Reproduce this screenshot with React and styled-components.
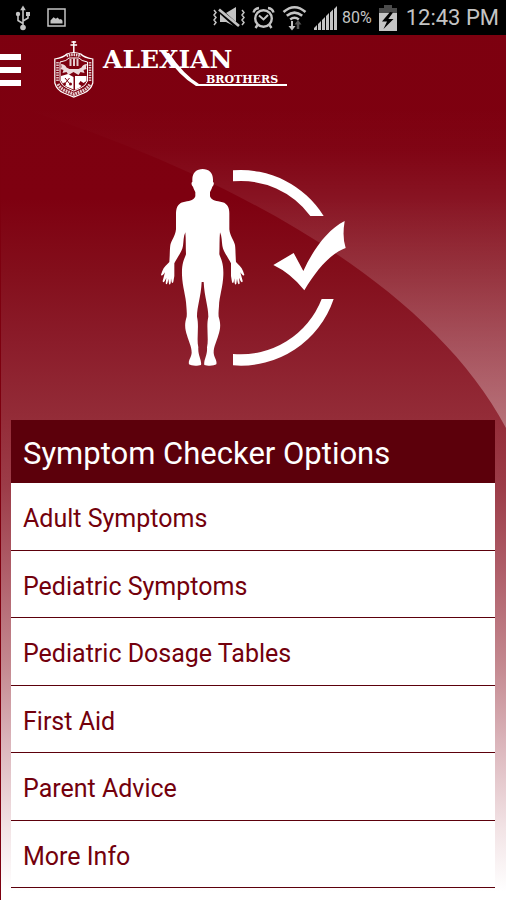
import React from 'react';
import styled, {createGlobalStyle} from 'styled-components';

const red = '#7d000f';
const darkRed = '#5c000b';

const GlobalStyle = createGlobalStyle`
  * {
    box-sizing: border-box;
  }
  body {
    margin: 0;
    font-family: Roboto, "Liberation Sans", sans-serif;
  }
`;

const Page = styled.div`
  position: relative;
  display: flex;
  flex-direction: column;
  min-height: 100vh;
  box-shadow: inset 1px 0 ${red};
  background: linear-gradient(
    #7d000f 0%,
    #7e0010 22%,
    #830e1b 30%,
    #8b1c2a 38%,
    #932b37 46%,
    #9c3c48 54%,
    #b0606b 64%,
    #c48990 74%,
    #dcb7bd 83%,
    #f2e3e5 92%,
    #ffffff 99%
  );
`;

const Swoosh = styled.svg`
  position: absolute;
  top: 0;
  left: 0;
  width: 100%;
  height: 428px;
`;

const StatusBar = styled.div`
  position: relative;
  display: flex;
  align-items: center;
  justify-content: space-between;
  height: 35px;
  padding: 0 7px 0 14px;
  color: #c4c4c4;
  background-color: #000;
`;

const StatusGroup = styled.div`
  display: flex;
  align-items: center;
  gap: ${({gap}) => gap};
`;

const Percent = styled.span`
  margin-left: -3px;
  font-size: 16px;
  line-height: 20px;
`;

const Clock = styled.span`
  padding-left: 2px;
  font-size: 22px;
  line-height: 28px;
`;

const Header = styled.header`
  position: relative;
  display: flex;
  align-items: center;
  gap: 32px;
  height: 70px;
`;

const MenuButton = styled.button`
  display: flex;
  flex-direction: column;
  gap: 7px;
  width: 21px;
  padding: 0;
  border: 0;
  background: none;
  cursor: pointer;
`;

const Bar = styled.span`
  height: 6px;
  background-color: #fff;
`;

const HomeLink = styled.a`
  display: flex;
`;

const Hero = styled.div`
  position: relative;
  display: flex;
  justify-content: center;
  padding: 63px 0 53px;
`;

const Options = styled.nav`
  position: relative;
  margin: 0 11px 12px;
  background-color: #fff;
`;

const Title = styled.h1`
  margin: 0;
  padding: 16px 12px 11px;
  font-size: 31px;
  font-weight: 400;
  line-height: 36px;
  color: #fff;
  background-color: ${darkRed};
`;

const List = styled.ul`
  margin: 0;
  padding: 0;
  list-style: none;
`;

const Item = styled.li`
  border-bottom: 1px solid ${darkRed};
  &:nth-child(odd) {
    padding-bottom: 1px;
  }
`;

const ItemLink = styled.a`
  display: block;
  padding: 21px 12px 15px;
  font-size: 25px;
  line-height: 30px;
  color: #73000c;
  text-decoration: none;
`;

const UsbIcon = () => (
    <svg width="18" height="26" viewBox="0 0 18 26" fill="none" stroke="currentColor" strokeWidth="1.6" aria-hidden="true">
        <path d="M9 4v18M9 18.5L4 15.5V9M9 16l5-3V9" />
        <path d="M9 .5l2.8 4.8H6.2z" fill="currentColor" stroke="none" />
        <circle cx="4" cy="9" r="2.2" fill="currentColor" stroke="none" />
        <path d="M12 7h4v4h-4z" fill="currentColor" stroke="none" />
        <circle cx="9" cy="22.5" r="2.8" fill="currentColor" stroke="none" />
    </svg>
);

const PictureIcon = () => (
    <svg width="19" height="19" viewBox="0 0 19 19" aria-hidden="true">
        <path d="M1 1h17v17H1z" fill="none" stroke="currentColor" strokeWidth="1.5" />
        <path d="M3.5 15.5v-3l3-3.2 2.400 1.500 1.600-1.200 2 2 1.500-.6 1.500 1.800v2.700z" fill="currentColor" />
    </svg>
);

const VibrateIcon = () => (
    <svg width="33" height="22" viewBox="0 0 33 22" fill="none" stroke="currentColor" aria-hidden="true">
        <path d="M2 3l2 2.5-2 2.5 2 2.5-2 2.5 2 2.5-2 2.5M30 3l2 2.5-2 2.5 2 2.5-2 2.5 2 2.5-2 2.5" strokeWidth="1.5" />
        <path d="M8 6h6l10-6v20l-10-5H8z" fill="currentColor" stroke="none" />
        <path d="M6 2l20 18" stroke="#000" strokeWidth="5" />
        <path d="M7 2.5l20 16.5" strokeWidth="2.8" />
    </svg>
);

const AlarmIcon = () => (
    <svg width="23" height="24" viewBox="0 0 23 24" fill="none" stroke="currentColor" strokeWidth="2.4" aria-hidden="true">
        <circle cx="11.5" cy="12.5" r="8.3" />
        <path d="M1.5 6.5q1-4 5.5-4.5M21.5 6.5q-1-4-5.5-4.5M5.5 19l-2 3M17.5 19l2 3" />
        <path d="M7 9.5l4.500 4 4.500-4.500" strokeWidth="2" />
    </svg>
);

const WifiIcon = () => (
    <svg width="25" height="26" viewBox="0 0 25 26" fill="none" stroke="currentColor" strokeWidth="2.6" aria-hidden="true">
        <path d="M1.5 7q11-9.500 22 0M4.800 10.800q7.700-6.500 15.400 0M8.200 14.500q4.300-3.500 8.600 0" />
        <path d="M10 16v7" strokeWidth="2" />
        <path d="M6.5 21h7L10 25.5z" fill="currentColor" stroke="none" />
        <path d="M16 24v-6" stroke="#555" strokeWidth="2.5" />
        <path d="M12.5 19.5h7L16 15z" fill="#555" stroke="none" />
    </svg>
);

const SignalIcon = () => (
    <svg width="24" height="24" viewBox="0 0 24 24" fill="currentColor" aria-hidden="true">
        <path d="M0 24v-2l3-3v5zM4 24v-6l3-3v9zM8 24V14l3-3v13zM12 24V10l3-3v17zM16 24V6.5l3-3V24zM20 24V3l3-3v24z" />
    </svg>
);

const BatteryIcon = () => (
    <svg width="18" height="26" viewBox="0 0 18 26" aria-hidden="true">
        <path d="M0 3h5V0h8v3h5v5H0z" fill="#4b4b4b" />
        <path d="M0 8h18v18H0z" fill="currentColor" />
        <path d="M11 7L3 16.5h5L4.5 24l10-10H9.3L14 7.5z" fill="#000" />
    </svg>
);

const Logo = () => (
    <svg width="236" height="60" viewBox="53 40 236 60" fill="#fff" role="img" aria-label="Alexian Brothers">
        <path d="M73.8 41v12M70.5 45h6.600M71.500 42h4.600" fill="none" stroke="#fff" strokeWidth="1.5" />
        <g fill="none" stroke="#fff">
            <path d="M54.8 59q9-1.500 12-5 7-3 14 0 3 3.500 12 5v24q-2 7-9 10l-10 4-10-4q-7-3-9-10z" strokeWidth="1.2" />
            <path d="M60 62q7-1 9-4h10q2 3 8.500 4v19q-2 5-7 7l-6.700 3-6.800-3q-5-2-7-7z" strokeWidth="1" />
            <path d="M57.5 62v20M90 62v20" strokeWidth="2.6" strokeDasharray="1.6 .9" opacity=".75" />
            <path d="M58 84q2 4 7 6.500l9 3.700 9-3.700q5-2.500 7-6.500" strokeWidth="3.2" strokeDasharray="1.8 .8" opacity=".8" />
            <path d="M66.5 56q7-2.600 14.500 0" strokeWidth="2.8" strokeDasharray="1.5 .9" opacity=".85" />
        </g>
        <path d="M61 76l7-2 5.500 3v12.500l-7-3q-4-2-5.500-6z" />
        <path d="M75 76h11.500v5l-3 2-3-2-2 3 3 2-2 1.800-4.500 2z" />
        <path d="M69.5 59h2v7h-2zM73 58.5h2v7.500h-2zM76.500 59h2v7h-2z" opacity=".8" />
        <path d="M61 64q4 0 5.500 3.500l3 1.500h9l3-1.500Q83 64 87 64l-1 3 .5 2-3 1 1 3-4-1-2 3-5-3-5 3-2-3-4 1 1-3-3-1 1-2z" opacity=".85" />
        <path d="M65 78l4.500 5.500M69.500 78L65 83.500" stroke={red} strokeWidth="1" />
        <circle cx="64.5" cy="84" r="1.5" fill={red} />
        <circle cx="70.5" cy="84" r="1.5" fill={red} />
        <text x="103" y="68" fontFamily='"DejaVu Serif", serif' fontSize="25" fontWeight="700">ALEXIAN</text>
        <path d="M164 53h5Q184 75 199 84h88v2h-91Q179 76 164 53z" />
        <text x="206" y="83" fontFamily='"DejaVu Serif", serif' fontSize="11" fontWeight="700">BROTHERS</text>
    </svg>
);

const CheckerIcon = () => (
    <svg width="185" height="199" viewBox="480 204 555 597" fill="#fff" aria-hidden="true">
        <defs>
            <path
                id="half-body"
                d="M604 207C624 207 636 218 636 238V246C640 247 639 257 634 260C632 268 628 272 627 277V289C631 299 640 303 658 305C676 307 685 319 685 340V388C687 408 699 422 702 435C704 448 703 460 705 486C712 494 722 501 726 513L730 524C728 530 723 524 718 517L725 543C724 550 720 547 714 533L716 550C714 556 710 553 708 536L706 551C703 557 700 553 700 535L698 547C695 551 693 549 692 540L690 528V490C682 473 667 456 664 437C662 425 663 410 657 397C655 420 656 440 655 463C661 480 668 490 667 525C666 560 655 590 654 618C653 632 652 640 653 650C661 675 657 690 652 706C648 722 638 740 638 758C639 773 649 780 646 793C640 798 620 798 610 795C607 780 620 765 618 742C624 715 615 680 622 650C622 620 610 590 608 546H604z"
            />
        </defs>
        <use href="#half-body" />
        <use href="#half-body" transform="translate(1210 0) scale(-1 1)" />
        <path d="M696 211A293.5 293.5 0 0 1 968 348H928A260 260 0 0 0 696 244z" />
        <path d="M998 597A293.5 293.5 0 0 1 696 796V762A260 260 0 0 0 962 597z" />
        <path d="M817 495L878 459L907 513C936 450 978 390 1031 363Q1023 412 1034 444C988 460 945 512 910 571Q870 520 817 495z" />
    </svg>
);

const options = [
    'Adult Symptoms',
    'Pediatric Symptoms',
    'Pediatric Dosage Tables',
    'First Aid',
    'Parent Advice',
    'More Info'
];

function App () {
    return (
        <Page>
            <GlobalStyle />
            <Swoosh viewBox="0 0 506 428" preserveAspectRatio="none" aria-hidden="true">
                <defs>
                    <linearGradient id="shine" x1="0" y1="0" x2="0" y2="1">
                        <stop offset=".25" stopColor="#fff" stopOpacity="0" />
                        <stop offset=".35" stopColor="#fff" stopOpacity=".02" />
                        <stop offset=".49" stopColor="#fff" stopOpacity=".09" />
                        <stop offset=".67" stopColor="#fff" stopOpacity=".17" />
                        <stop offset="1" stopColor="#fff" stopOpacity=".33" />
                    </linearGradient>
                </defs>
                <path d="M0 102C180 155 420 265 506 428V0H0z" fill="url(#shine)" />
            </Swoosh>
            <StatusBar>
                <StatusGroup gap="15px">
                    <UsbIcon />
                    <PictureIcon />
                </StatusGroup>
                <StatusGroup gap="7px">
                    <VibrateIcon />
                    <AlarmIcon />
                    <WifiIcon />
                    <SignalIcon />
                    <Percent>80%</Percent>
                    <BatteryIcon />
                    <Clock>12:43 PM</Clock>
                </StatusGroup>
            </StatusBar>
            <Header>
                <MenuButton aria-label="Menu">
                    <Bar />
                    <Bar />
                    <Bar />
                </MenuButton>
                <HomeLink href="#home">
                    <Logo />
                </HomeLink>
            </Header>
            <Hero>
                <CheckerIcon />
            </Hero>
            <Options aria-labelledby="options-title">
                <Title id="options-title">Symptom Checker Options</Title>
                <List>
                    {options.map(option => (
                        <Item key={option}>
                            <ItemLink href="#options">{option}</ItemLink>
                        </Item>
                    ))}
                </List>
            </Options>
        </Page>
    );
}

export default App;
